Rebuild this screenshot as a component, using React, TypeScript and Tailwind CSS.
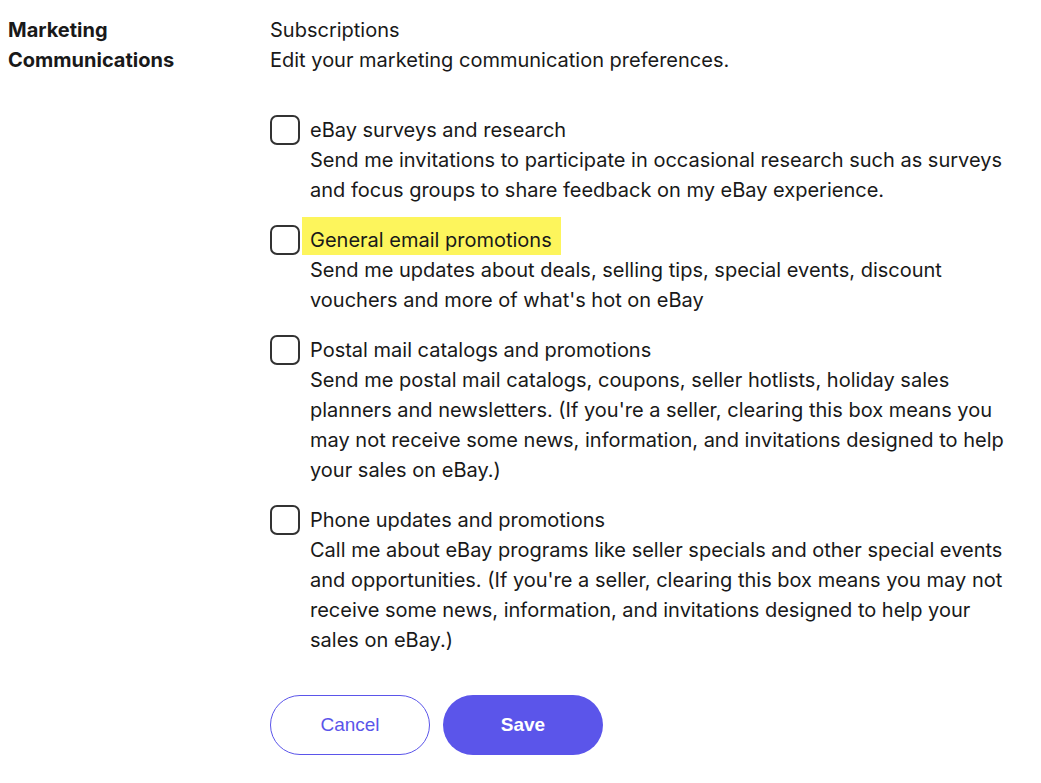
import React from 'react';

const items = [
  {
    title: 'eBay surveys and research',
    desc: 'Send me invitations to participate in occasional research such as surveys and focus groups to share feedback on my eBay experience.',
  },
  {
    title: 'General email promotions',
    desc: "Send me updates about deals, selling tips, special events, discount vouchers and more of what's hot on eBay",
    highlight: true,
  },
  {
    title: 'Postal mail catalogs and promotions',
    desc: "Send me postal mail catalogs, coupons, seller hotlists, holiday sales planners and newsletters. (If you're a seller, clearing this box means you may not receive some news, information, and invitations designed to help your sales on eBay.)",
  },
  {
    title: 'Phone updates and promotions',
    desc: "Call me about eBay programs like seller specials and other special events and opportunities. (If you're a seller, clearing this box means you may not receive some news, information, and invitations designed to help your sales on eBay.)",
  },
];

export default function App() {
  return (
    <div className="min-h-screen bg-white text-[#191919] font-['Inter',sans-serif] text-[20px] leading-[30px]">
      <div className="flex pt-[15px]">
        <div className="w-[270px] pl-[8px] font-bold shrink-0">
          Marketing
          <br />
          Communications
        </div>
        <div>
          <div>Subscriptions</div>
          <div>Edit your marketing communication preferences.</div>

          <div className="mt-[40px] flex flex-col gap-[20px]">
            {items.map((item) => (
              <label key={item.title} className="flex gap-[10px] items-start">
                <span className="w-[30px] h-[30px] rounded-[7px] border-2 border-[#333] shrink-0" />
                <span className="block w-[705px]">
                  <span
                    className={
                      item.highlight
                        ? 'inline-block bg-[#fdf55c] -ml-[8px] pl-[8px] pr-[9px] pt-[8px] -mt-[8px]'
                        : 'inline-block'
                    }
                  >
                    {item.title}
                  </span>
                  <span className="block">{item.desc}</span>
                </span>
              </label>
            ))}
          </div>

          <div className="mt-[40px] flex gap-[13px] font-['Liberation_Sans',Arial,sans-serif] text-[19px]">
            <button className="w-[160px] h-[60px] rounded-full border border-[#5b55ea] text-[#5b55ea] bg-white">
              Cancel
            </button>
            <button className="w-[160px] h-[60px] rounded-full bg-[#5b55ea] text-white font-bold">
              Save
            </button>
          </div>
        </div>
      </div>
    </div>
  );
}
